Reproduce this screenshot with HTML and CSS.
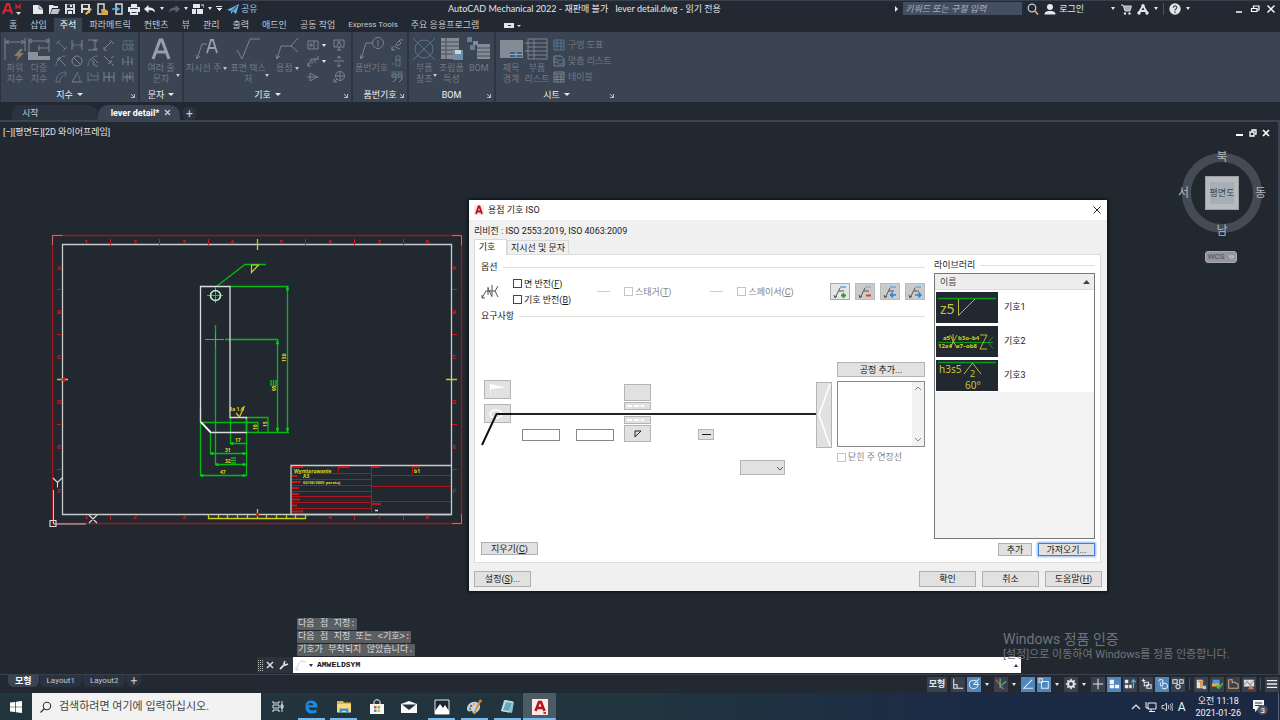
FILE: index.html
```html
<!DOCTYPE html>
<html lang="ko">
<head>
<meta charset="utf-8">
<title>AutoCAD Mechanical 2022</title>
<link rel="stylesheet" href="styles.css">
</head>
<body>
<div class="app">

<header class="titlebar">
  <div class="qat">
    <button class="app-logo" aria-label="응용프로그램 메뉴">
      <svg width="20" height="14" viewBox="0 0 20 14"><path d="M1 12 5 2h2l3 10M2.500 8.500h6" fill="none" stroke="#d8262f" stroke-width="2.200"/><path d="M14 7V3l2 2.500L18 3v4" fill="none" stroke="#d8262f" stroke-width="1.200"/><path d="M14 10h5l-2.500 3z" fill="#ddd"/></svg>
    </button>
    <button aria-label="새로 만들기"><svg viewBox="0 0 12 12"><path d="M1 2h6l4 4v5H1z" fill="#e8e8e8"/><path d="M7 2v4h4" fill="none" stroke="#777"/></svg></button>
    <button aria-label="열기"><svg viewBox="0 0 12 12"><path d="M1 11V2h4l1 1h4v2H4L2 11z" fill="#e8e8e8"/><path d="M4.500 6H12l-2 5H2.500z" fill="#bfc3c8"/></svg></button>
    <button aria-label="저장"><svg viewBox="0 0 12 12"><path d="M1 1h10v10H1z" fill="#d8dadd"/><path d="M3 1.500h6v3.500H3zM3 7h6v4H3z" fill="#2a313c"/><path d="M4 8h4v3H4zM6 2h2v2H6z" fill="#e8e8e8"/></svg></button>
    <button aria-label="다른 이름으로 저장"><svg viewBox="0 0 12 12"><path d="M1 1h9v9H1z" fill="#d8dadd"/><path d="M3 2h5v3H3zM3 7h5v3H3z" fill="#2a313c"/><path d="M5 10.500 10.500 5l1.500 1.500L6.500 12z" fill="#e5b656"/></svg></button>
    <button aria-label="웹에서 열기"><svg viewBox="0 0 12 12"><path d="M2 1h6v10H2z" fill="none" stroke="#d8dadd" stroke-width="1.500"/><path d="M5 6h4l3 2v4H6z" fill="#d9a648"/></svg></button>
    <button aria-label="모바일에 저장"><svg viewBox="0 0 12 12"><path d="M4 1h6v10H4z" fill="none" stroke="#d8dadd" stroke-width="1.500"/><path d="M0 6h6M4 4l3 2-3 2" fill="none" stroke="#5ab3e8" stroke-width="1.500"/></svg></button>
    <button aria-label="플롯"><svg viewBox="0 0 12 12"><path d="M3 1h6v3h3v5h-2v3H2V9H0V4h3z" fill="#e8e8e8"/><path d="M2 5.500h8M3.500 9.500h5" stroke="#39414e"/></svg></button>
    <button aria-label="명령 취소"><svg viewBox="0 0 12 12"><path d="M0 6 4.500 2v2.500C9 4.500 11 6 11 9.500 9.500 7.500 8 7 4.500 7.200V10z" fill="#e8e8e8"/></svg></button>
    <i class="caret"></i>
    <button aria-label="명령 복구"><svg viewBox="0 0 12 12"><path d="M12 6 7.500 2v2.500C3 4.500 1 6 1 9.500 2.500 7.500 4 7 7.500 7.200V10z" fill="#5b636f"/></svg></button>
    <i class="caret"></i>
    <button aria-label="작업공간"><svg viewBox="0 0 12 12"><path d="M1 1h7v4H1zM0 6h4v5H0zM5 6h6v5H5z" fill="#e8e8e8"/><path d="M9 2h3v3" fill="none" stroke="#e8e8e8"/></svg></button>
    <i class="caret"></i>
    <i class="caret bar"></i>
    <button class="share"><svg viewBox="0 0 12 12"><path d="M0 7 12 1 9 11 6 8.500 4 11V8z" fill="#66b8ec"/><path d="m4 8 6-5-4 5.500" stroke="#27303a" fill="none" stroke-width=".7"/></svg>공유</button>
  </div>
  <h1 class="app-title">AutoCAD Mechanical 2022 - 재판매 불가 <span>lever detail.dwg - 읽기 전용</span></h1>
  <div class="title-tools">
    <i class="caret right"></i>
    <input class="search" type="text" aria-label="검색" placeholder="키워드 또는 구절 입력">
    <button aria-label="찾기"><svg viewBox="0 0 12 12"><circle cx="5" cy="5" r="3.800" fill="none" stroke="#c8ccd0" stroke-width="1.300"/><path d="m8 8 3 3.500" stroke="#d9a648" stroke-width="1.800"/></svg></button>
    <button class="login"><svg viewBox="0 0 12 12"><circle cx="6" cy="4" r="3" fill="#e8e8e8"/><path d="M.5 11.500C.5 8.500 3 8 6 8s5.500.5 5.500 3.500z" fill="#e8e8e8"/></svg>로그인</button>
    <i class="caret"></i>
    <button aria-label="앱 스토어"><svg viewBox="0 0 12 12"><path d="M1 2h2l2 6h5l1.500-5H4" fill="#a9aeb5" stroke="#d0d3d7"/><circle cx="5" cy="10.500" r="1.200" fill="#ddd"/><circle cx="9.500" cy="10.500" r="1.200" fill="#ddd"/></svg></button>
    <button aria-label="Autodesk"><svg viewBox="0 0 12 12"><path d="M6 2.500 2 9.500M6 2.500l4 7M3 8h6" fill="none" stroke="#e8e8e8" stroke-width="1.800"/><circle cx="6" cy="2.500" r="1.600" fill="#e8e8e8"/><circle cx="2" cy="10" r="1.700" fill="#e8e8e8"/><circle cx="10" cy="10" r="1.700" fill="#e8e8e8"/></svg></button>
    <i class="caret"></i>
    <i class="sep"></i>
    <button aria-label="도움말"><svg viewBox="0 0 12 12"><circle cx="6" cy="6" r="5.700" fill="#e4e4e4"/><path d="M4.200 4.700c0-2.400 3.700-2.300 3.600 0C7.700 6 6 6 6 7.500M6 8.500V10" fill="none" stroke="#39414e" stroke-width="1.200"/></svg></button>
    <i class="caret"></i>
  </div>
  <div class="win-buttons">
    <button aria-label="최소화"><svg viewBox="0 0 10 10"><path d="M2 8h6" stroke="#fff" stroke-width="1.500"/></svg></button>
    <button aria-label="복원"><svg viewBox="0 0 10 10"><path d="M1.500 4.500h5.500v3H1.500zM3.500 4V2H9v4H7" fill="none" stroke="#fff" stroke-width="1.200"/></svg></button>
    <button aria-label="닫기"><svg viewBox="0 0 10 10"><path d="m1.500 1.500 7 7m0-7-7 7" stroke="#fff" stroke-width="1.400"/></svg></button>
  </div>
</header>

<nav class="ribbon-tabs">
  <button>홈</button><button>삽입</button><button class="active">주석</button><button>파라메트릭</button><button>컨텐츠</button><button>뷰</button><button>관리</button><button>출력</button><button>애드인</button><button>공동 작업</button><button class="latin">Express Tools</button><button>주요 응용프로그램</button>
  <button class="ribbon-mode" aria-label="리본 최소화"><svg width="18" height="7" viewBox="0 0 18 7"><path d="M0 1h10v5H0z" fill="#e2e4e6"/><path d="M4 3h3v1H4z" fill="#333"/><path d="M13 3h4l-2 2z" fill="#ddd"/></svg></button>
</nav>

<section class="ribbon">
  <div class="panel p-dim">
    <div class="panel-body">
      <button class="big"><svg viewBox="0 0 24 24"><path d="M2 1v22M22 1v13M2 5h20M6 3 2 5l4 2M18 3l4 2-4 2" class="g"/><path d="m17 12-6 7h4l-2 5 8-8h-4l3-4z" fill="#8c7c58"/></svg>파워<br>지수</button>
      <button class="big"><svg viewBox="0 0 24 24"><path d="M2 1v14M22 1v14M2 4h20M5 2 2 4l3 2M19 2l3 2-3 2M12 8v6M12 11h10" class="g"/><path d="M1 15h10v4h12v4H1z" fill="#8b919a"/></svg>다중<br>지수</button>
      <div class="tools five">
        <button aria-label="정렬"><svg viewBox="0 0 12 12"><path d="m3 3 7 7M1 5l4-4M8 12l4-4" class="b"/></svg></button>
        <button aria-label="선형"><svg viewBox="0 0 12 12"><path d="M1 1v10M11 1v10" class="g"/><path d="M1 6h10M3 4 1 6l2 2M9 4l2 2-2 2" class="b"/></svg></button>
        <button aria-label="세로"><svg viewBox="0 0 12 12"><path d="M1 1h10M1 11h10M8 1v10M6 3l2-2 2 2M6 9l2 2 2-2" class="g"/></svg></button>
        <button aria-label="꺾기"><svg viewBox="0 0 12 12"><path d="m1 10 8-8M7 1l4 4M1 8v3h3" class="g"/></svg></button>
        <button aria-label="신속"><svg viewBox="0 0 12 12"><path d="M1 2h10M1 5h4v6H1zM7 5h4v2H7zM7 9h4v2H7z" class="b"/></svg></button>
        <button aria-label="반지름"><svg viewBox="0 0 12 12"><path d="M1 11C1 5 5 1 11 1" class="b"/><path d="m3 3 8 8M3 6V3h3" class="g"/></svg></button>
        <button aria-label="지름"><svg viewBox="0 0 12 12"><circle cx="6" cy="6" r="5" class="g"/><path d="m2.500 2.500 7 7" class="g"/></svg></button>
        <button aria-label="조그"><svg viewBox="0 0 12 12"><path d="M1 11C1 5 5 1 11 1" class="b"/><path d="m3 4 4 3-1 2 5 3M6 3l5 5" class="g"/></svg></button>
        <button aria-label="모따기"><svg viewBox="0 0 12 12"><path d="m1 1 6 6M5 8h3V5M8 3l3-2M9 9l2 2" class="g"/></svg></button>
        <button aria-label="끊기"><svg viewBox="0 0 12 12"><path d="M1 3v7M6 1v10M10 3v7" class="g"/><path d="M1 7h10" class="b"/></svg></button>
        <button aria-label="호 길이"><svg viewBox="0 0 12 12"><path d="M1 11C1 5 5 1 11 1v3C7 4 5 7 5 11z" class="b"/></svg></button>
        <button aria-label="각도"><svg viewBox="0 0 12 12"><path d="M7 1 1 11h10" class="g"/><path d="M5 3c3 1 4 4 4 8" class="b"/></svg></button>
        <button aria-label="기준선"><svg viewBox="0 0 12 12"><path d="M1 1v10M11 1v4H4V2M1 9h10V5" class="b"/></svg></button>
        <button aria-label="연속"><svg viewBox="0 0 12 12"><path d="M1 1v10M6 1v10M11 1v10M1 6h10" class="g"/></svg></button>
        <button aria-label="대칭"><svg viewBox="0 0 12 12"><path d="M1 1v10M11 1v10" class="b"/><path d="M5 3v8M8 1v8M1 6h10" class="g"/></svg></button>
      </div>
    </div>
    <div class="panel-title"><span>지수<i class="caret w"></i></span><i class="launch"></i></div>
  </div>
  <div class="panel p-text">
    <div class="panel-body">
      <button class="big"><svg viewBox="0 0 24 24"><path d="M4 22 11 3h2l7 19M7 15h10" fill="none" stroke="#9a9fa7" stroke-width="3"/></svg><span>여러 줄<br>문자</span><i class="caret"></i></button>
    </div>
    <div class="panel-title"><span>문자<i class="caret w"></i></span></div>
  </div>
  <div class="panel p-sym">
    <div class="panel-body">
      <button class="big"><svg viewBox="0 0 24 24"><path d="m2 22 5-15h5M1 18l1 4 3-3" class="g"/><path d="m12 16 4-13h2l4 13M13 11h8" fill="none" stroke="#9a9fa7" stroke-width="1.800"/></svg><span class="row">지시선 주<i class="caret"></i></span></button>
      <button class="big"><svg viewBox="0 0 24 24"><path d="m1 13 5 9L14 2h10" class="g"/></svg><span>표면 텍스<br>처</span><i class="caret"></i></button>
      <button class="big"><svg viewBox="0 0 24 24"><path d="m2 22 4-13h10l7-8M16 9l7 6M1 18l1 4 3-3" class="g"/></svg><span class="row">용접<i class="caret"></i></span></button>
      <div class="tools two">
        <button aria-label="공차"><svg viewBox="0 0 12 12"><path d="M1 2h10v8H1zM7 2v8M2 6h4M4 4v4" class="g"/></svg><i class="caret"></i></button>
        <button aria-label="데이텀"><svg viewBox="0 0 12 12"><path d="M1 1h10v7H1zM6 8v3M4 11h4M4 7l2-5 2 5" class="g"/></svg></button>
        <button aria-label="모서리"><svg viewBox="0 0 12 12"><path d="m1 11 3-7h7M1 8v3h3M5 5v4M8 3v5M11 1v4" class="g"/></svg><i class="caret"></i></button>
        <button aria-label="대상"><svg viewBox="0 0 12 12"><path d="M1 6h10M6 1v3M6 8v4M4 3l2-2 2 2M4 10l2 2 2-2" class="g"/></svg></button>
        <button aria-label="테이퍼"><svg viewBox="0 0 12 12"><path d="M0 6h12M3 2v8l7-4z" class="g"/></svg></button>
        <button aria-label="중심"><svg viewBox="0 0 12 12"><circle cx="7" cy="5" r="4.500" class="g"/><path d="M2 5h10M7 0v10M1 11l3-3M1 8v3h3" class="g"/></svg></button>
      </div>
    </div>
    <div class="panel-title"><span>기호<i class="caret w"></i></span><i class="launch"></i></div>
  </div>
  <div class="panel p-balloon">
    <div class="panel-body">
      <button class="big"><svg viewBox="0 0 24 24"><circle cx="18" cy="6" r="5.500" class="g"/><path d="M18 3v6M1 22 6 6h6M0 18l1 4 3-3" class="g"/></svg>품번기호</button>
      <div class="tools one">
        <button aria-label="부품 참조 작성"><svg viewBox="0 0 12 12"><path d="M1 11c0-5 3-3 4-5M1 8v3h3M5 5l3-3 2 2-3 3zM8 2c1-2 3-1 4-1M4 8l5 2" class="g"/></svg></button>
        <button aria-label="정렬"><svg viewBox="0 0 12 12"><path d="M1 9h2M5 1h4v4H5zM5 5h4v6H5z" class="b"/></svg></button>
        <button aria-label="재번호"><svg viewBox="0 0 12 12"><path d="M0 1h12" class="b"/><path d="M5 6H1V3h4v5l-3 3M11 6H7V3h4v5l-3 3" class="g"/></svg></button>
      </div>
    </div>
    <div class="panel-title"><span>품번기호</span><i class="launch"></i></div>
  </div>
  <div class="panel p-bom">
    <div class="panel-body">
      <button class="big"><svg viewBox="0 0 24 24"><circle cx="12" cy="12" r="9" class="b"/><path d="m1 1 22 22M23 1 1 23" class="b"/></svg><span>부품<br>참조</span><i class="caret"></i></button>
      <button class="big"><svg viewBox="0 0 24 24"><path d="M2 1h18v21H2z" fill="#858b94"/><path d="M2 5h18M2 9h18M2 13h18M2 17h18M7 1v21" stroke="#48515f" fill="none"/><path d="M14 13h10v10H14z" fill="#6b8fab"/><path d="M16 13h6v4h-6z" fill="#d0d4d8"/></svg>조립품<br>특성</button>
      <button class="big"><svg viewBox="0 0 24 24"><path d="M0 0h5v5H0zM3 8h5v5H3z" fill="#607f9b"/><path d="M6 4h5v4H6zM10 7h13v15H10z" fill="#858b94"/><path d="M10 11h13M10 15h13M10 19h13" stroke="#48515f"/></svg>BOM</button>
    </div>
    <div class="panel-title"><span>BOM</span><i class="launch"></i></div>
  </div>
  <div class="panel p-sheet">
    <div class="panel-body">
      <button class="big"><svg viewBox="0 0 24 24"><path d="M1 3h23v18H1z" fill="#858b94"/><path d="M11 15h12v5H11z" fill="#41627c"/><path d="M11 17.500h12M17 15v5" stroke="#8db0c9"/></svg>제목<br>경계</button>
      <button class="big"><svg viewBox="0 0 24 24"><path d="M3 2h19v20H3zM3 6h19M3 10h19M3 14h19M3 18h19M9 2v20M0 6h3M0 14h3" class="g"/></svg>부품<br>리스트</button>
      <div class="tools list">
        <button><svg viewBox="0 0 12 12"><path d="M1 1h10v10H1zM1 4h10M1 7h10M4 1v10M8 1v10" class="b"/></svg>구멍 도표</button>
        <button><svg viewBox="0 0 12 12"><path d="M1 1h7l3 3v7H1zM1 4h3M1 7h3" class="g"/><path d="M5 5h5v4H5z" class="b"/></svg>맞춤 리스트</button>
        <button><svg viewBox="0 0 12 12"><path d="M1 1h10v10H1zM1 3h10M1 6h10M1 8.500h10M4 3v8M8 3v8" class="g"/></svg>테이블</button>
      </div>
    </div>
    <div class="panel-title"><span>시트<i class="caret w"></i></span><i class="launch"></i></div>
  </div>
</section>

<nav class="doc-tabs">
  <button class="doc">시작</button>
  <button class="doc active">lever detail*<svg width="7" height="7" viewBox="0 0 7 7"><path d="m1 1 5 5m0-5L1 6" stroke="#ccd0d6" stroke-width="1.200"/></svg></button>
  <button class="add" aria-label="새 도면">+</button>
</nav>

<main class="canvas">
  <p class="view-label">[−][평면도][2D 와이어프레임]</p>

  <svg class="drawing" width="470" height="552" viewBox="0 122 470 552" role="img" aria-label="lever detail 도면">
    <g fill="none">
      <path d="M52.500 235.500h409v288h-409z" stroke="#a3151b" stroke-width="1.300"/>
      <path d="M52.500 245v-9.500h10M452 235.500h9.500v10M461.500 514v9.500H452" stroke="#c76a6e"/>
      <path d="M62.500 244.500h389v270h-389z" stroke="#c8cacc" stroke-width="1.300"/>
      <path d="M110.500 239v6M159.500 239v6M208.500 239v6M305.500 239v6M354.500 239v6M403.500 239v6M110.500 515v5M354.500 515v5M403.500 515v5M57 289.500h4M57 334.500h4M57 424.500h4M57 469.500h4M452 289.500h5M452 334.500h5M452 424.500h5M452 469.500h5" stroke="#d01616"/>
      <path d="M257.500 239v11M257.500 509v9M57 379.500h11M446 379.500h11M208.500 514.500v4h97v-4M218.500 515v4M227.500 515v4M237.500 515v4M247.500 515v4M266.500 515v4M276.500 515v4M286.500 515v4M295.500 515v4" stroke="#cccc10" stroke-width="1.300"/>
      <path d="m61 379.500 4-2.500v5zM257.500 517l-2.500-4h5z" fill="#e01414"/>
      <path d="m217 286 28-21.500h21M230 286.500h58.500M287.500 286v146M246 432.500h43M225 339.500h53M277.500 339v93M215.500 325v139M200.500 408v68M200.500 422.500H258v10M246.500 417.500H268v15M230.500 417v27M230 443.500h17M246.500 432v44M210.500 432v22M210 453.500h37M215 464.500h32M200 475.500h47" stroke="#05b814" stroke-width="1.300"/>
      <path d="m287.500 286-1 4h2zM287.500 432l-1-4h2zM277.500 340l-1 4h2zM277.500 432l-1-4h2zM230 443.500l3-1v2zM246 453.500l-3-1v2zM210 453.500l3-1v2zM246 464.500l-3-1v2zM215 464.500l3-1v2zM200 475.500l3-1v2zM246 475.500l-3-1v2z" fill="#05d014" stroke="#05d014"/>
      <path d="M200.500 422V286.500H230V417.500h16.500v15H210.500z" stroke="#dadcde" stroke-width="1.300"/>
      <path d="M246.500 419v13" stroke="#05b814" stroke-width="1.300"/>
      <path d="m201 422 9.500 10" stroke="#fff" stroke-width="1.800"/>
      <path d="M207 295.500h16M215.500 287v16M205 339.500h19M215.500 332v15" stroke="#10b5c0"/>
      <circle cx="215.500" cy="295.500" r="5" stroke="#bdf5c8" stroke-width="1.600"/>
      <path d="M251.500 265v7.500l7-7.500zM236 413l3.500 4 5-11" stroke="#d2d21c" stroke-width="1.200"/>
      <path d="M338.500 465v8M371.500 465v49M412.500 465v10M291 473.500h80M291 479.500h80M291 485.500h80M291 491.500h80M291 496.500h80M291 502.500h80M291 508.500h80M371 475.500h80M371 486.500h80M371 501.500h80" stroke="#b3141a"/>
      <path d="M291 514.500v-49h160.500M291 514.500h160" stroke="#c8cacc" stroke-width="1.300"/>
      <path d="M53.500 490v34H86" stroke="#d8c0c2"/>
      <path d="M50 520.500h6v6h-6zM89 515l8 8m0-8-8 8M53 478l4.500 4.500L62 478M57.500 482.500v5" stroke="#dcdcdc" stroke-width="1.100"/>
      <path d="M375 510.500h3" stroke="#ddd" stroke-width="1.500"/>
    </g>
    <g class="ref">
      <text x="86" y="244">1</text><text x="135" y="244">2</text><text x="184" y="244">3</text><text x="232" y="244">4</text><text x="281" y="244">5</text><text x="330" y="244">6</text><text x="379" y="244">7</text><text x="427" y="244">8</text>
      <text x="86" y="519">1</text><text x="135" y="519">2</text><text x="184" y="519">3</text><text x="330" y="519">6</text><text x="379" y="519">7</text><text x="427" y="519">8</text>
      <text x="59" y="270">A</text><text x="59" y="314">B</text><text x="59" y="359">C</text><text x="59" y="404">D</text><text x="59" y="449">E</text><text x="59" y="493">F</text>
      <text x="454" y="270">A</text><text x="454" y="314">B</text><text x="454" y="359">C</text><text x="454" y="404">D</text><text x="454" y="449">E</text><text x="454" y="493">F</text>
    </g>
    <path d="M292 467h11M339 467h10M372 467h8M413 467h7M292 476h5M292 482h9M292 488h7M292 494h7M292 499.500h8M292 505.500h5M292 511.500h11M372 504h9" stroke="#e01414" stroke-width="2" stroke-dasharray="2 .5 3 .4"/>
    <g class="dims">
      <text x="235" y="442">17</text><text x="225" y="452">31</text><text x="225" y="463">32</text><text x="220" y="474">47</text>
      <text transform="translate(286 362)rotate(-90)">150</text><text transform="translate(276 391)rotate(-90)">95</text><text transform="translate(257 430)rotate(-90)">10</text><text transform="translate(267 427)rotate(-90)">15</text>
      <text x="229" y="411">Ra 1.6</text>
      <text x="294" y="473">Wymiarowanie</text><text x="303" y="478">A3</text><text class="date" x="303" y="484">02/06/2005 paretoj</text><text x="414" y="473">b1</text>
    </g>
    <path d="M231 458h5M231 460.500h5M231 463h5M271 380v6M273.500 380v6M276 380v6" stroke="#05b814" stroke-width="1.500"/>
  </svg>

  <div class="doc-buttons">
    <button aria-label="최소화"><svg viewBox="0 0 10 10"><path d="M1 7h7" stroke="#fff" stroke-width="2"/></svg></button>
    <button aria-label="복원"><svg viewBox="0 0 10 10"><path d="M2 4h4v4H2zM4 3V2h4v4H7" fill="none" stroke="#fff" stroke-width="1.300"/></svg></button>
    <button aria-label="닫기"><svg viewBox="0 0 10 10"><path d="m2 2 6 6m0-6L2 8" stroke="#fff" stroke-width="1.700"/></svg></button>
  </div>

  <div class="compass">
    <span class="n">북</span><span class="w">서</span><button class="cube"><b>평면도</b></button><span class="e">동</span><span class="s">남</span>
  </div>
  <button class="wcs">WCS<svg width="7" height="5" viewBox="0 0 7 5"><path d="M1 1h5L3.500 4z" fill="none" stroke="#c9c9d2"/></svg></button>

  <section class="dialog" role="dialog" aria-label="용접 기호 ISO">
    <header class="dialog-title">
      <svg width="10" height="10" viewBox="0 0 10 10"><path d="M0 0h10v10H0z" fill="#f9e9e6"/><path d="M2 9 4.500 1.500h1L8 9M3 6.500h4" fill="none" stroke="#b5121b" stroke-width="1.800"/></svg>
      <h2>용접 기호 ISO</h2>
      <button class="close" aria-label="닫기"><svg width="8" height="8" viewBox="0 0 8 8"><path d="m.5.5 7 7m0-7-7 7" stroke="#222"/></svg></button>
    </header>
    <div class="dialog-body">
      <p class="revision">리비전 : ISO 2553:2019, ISO 4063:2009</p>
      <div class="tabs"><button class="tab on">기호</button><button class="tab">지시선 및 문자</button></div>
      <div class="page">
        <div class="left">
          <h3 class="legend">옵션</h3>
          <div class="options">
            <svg width="18" height="16" viewBox="0 0 18 16"><path d="m1 14 4-7h9M14 7l3-5M14 7l3 6M7 4l4 9M7 3v8M11 1v11M1 11v3h3" fill="none" stroke="#555"/></svg>
            <div class="checks">
              <label><input type="checkbox">면 반전(<u>F</u>)</label>
              <label><input type="checkbox">기호 반전(<u>B</u>)</label>
            </div>
            <i class="dash"></i>
            <label class="off"><input type="checkbox" disabled>스태거(<u>T</u>)</label>
            <i class="dash"></i>
            <label class="off"><input type="checkbox" disabled>스페이서(<u>C</u>)</label>
            <div class="lib-tools">
              <button class="light" aria-label="추가"><svg viewBox="0 0 14 14"><path d="m2 13 5-10M1 10l1 3 2-2" class="k"/><path d="M7 2h6" stroke="#3c9be0" stroke-width="1.300"/><path d="M6 6h5" class="k"/><path d="M8 10.500h5M10.500 8v5" stroke="#17a33c" stroke-width="1.800"/></svg></button>
              <button aria-label="제거"><svg viewBox="0 0 14 14"><path d="m2 13 5-10M1 10l1 3 2-2" class="k"/><path d="M7 2h6" stroke="#6ba8d4"/><path d="M6 6h5" class="k"/><path d="M8 10.500h5" stroke="#e53935" stroke-width="2"/></svg></button>
              <button aria-label="가져오기"><svg viewBox="0 0 14 14"><path d="m2 13 5-10M1 10l1 3 2-2" class="k"/><path d="M7 2h6" stroke="#3c9be0"/><path d="M6 6h5" class="k"/><path d="M7 10h6M10 7.500 7.500 10l2.500 2.500" fill="none" stroke="#1b86e0" stroke-width="1.500"/></svg></button>
              <button aria-label="내보내기"><svg viewBox="0 0 14 14"><path d="m2 13 5-10M1 10l1 3 2-2" class="k"/><path d="M7 2h6" stroke="#3c9be0"/><path d="M6 6h5" class="k"/><path d="M7 10h6M10.500 7.500 13 10l-2.500 2.500" fill="none" stroke="#1b86e0" stroke-width="1.500"/></svg></button>
            </div>
          </div>
          <h3 class="legend">요구사항</h3>
          <div class="weld">
            <div class="ends">
              <button aria-label="현장 용접"><svg width="18" height="14" viewBox="0 0 18 14"><path d="M1 14V1l16 3.500L2 6z" fill="#fff"/></svg></button>
              <button aria-label="전체 둘레"><svg width="18" height="14" viewBox="0 0 18 14"><ellipse cx="7" cy="7" rx="6" ry="4" fill="none" stroke="#fff" stroke-width="1.500"/></svg></button>
            </div>
            <input class="size" type="text" aria-label="치수">
            <input class="size" type="text" aria-label="길이">
            <div class="sides">
              <button class="tall" aria-label="위 기호"></button>
              <button class="thin" aria-label="위 식별선"><i></i></button>
              <button class="thin low" aria-label="아래 식별선"><i></i></button>
              <button class="tall" aria-label="아래 기호"><svg width="8" height="8" viewBox="0 0 8 8"><path d="M1 7V1h6z" fill="none" stroke="#222"/></svg></button>
            </div>
            <button class="contour" aria-label="윤곽"><i></i></button>
            <select aria-label="방법"><option></option></select>
            <button class="tail" aria-label="꼬리"><svg width="14" height="64" viewBox="0 0 14 64"><path d="M13 1 2 32l11 31" fill="none" stroke="#fff" stroke-width="1.500"/></svg></button>
            <div class="process">
              <button class="btn">공정 추가...</button>
              <div class="process-list">
                <textarea aria-label="공정"></textarea>
                <span class="scroll"><svg width="6" height="4" viewBox="0 0 6 4"><path d="m0 4 3-3 3 3" fill="none" stroke="#888"/></svg><svg width="6" height="4" viewBox="0 0 6 4"><path d="m0 0 3 3 3-3" fill="none" stroke="#888"/></svg></span>
              </div>
              <label class="off"><input type="checkbox" disabled>닫힌 주 연장선</label>
            </div>
            <i class="ref-line"></i>
            <svg class="leader" width="32" height="34" viewBox="0 0 32 34"><path d="M1 33 15.500 2H31" fill="none" stroke="#111" stroke-width="2"/></svg>
          </div>
          <button class="btn clear">지우기(<u>C</u>)</button>
        </div>
        <aside class="library">
          <h3 class="legend">라이브러리</h3>
          <div class="lib-box">
            <button class="lib-head">이름<svg width="7" height="4" viewBox="0 0 7 4"><path d="M0 4h7L3.500 0z" fill="#444"/></svg></button>
            <ul>
              <li><svg width="62" height="31" viewBox="0 0 62 31"><path d="M0 0h62v31H0z" fill="#212830"/><path d="M2 6.500h58" stroke="#0a9a18" stroke-width="1.300"/><path d="M22.500 7v16.500L39 7" fill="none" stroke="#b9b93a"/><text x="4" y="22" font-size="14">z5</text></svg>기호1</li>
              <li><svg width="62" height="31" viewBox="0 0 62 31"><path d="M0 0h62v31H0z" fill="#212830"/><path d="M2 16.500h55M57 11l-5 5.500 5 6" fill="none" stroke="#0a9a18"/><path d="m14 9 7 13M21 9l-7 13M17 8v9" stroke="#b9b93a" fill="none"/><g class="heavy"><text x="7" y="14" font-size="6">a5</text><text x="22" y="14" font-size="6">b3o–b4</text><text x="2" y="22" font-size="6">12a4</text><text x="20" y="22" font-size="6">a7–ob8</text></g><path d="M44 9h7l-7 14h7" stroke="#b9b93a" fill="none"/></svg>기호2</li>
              <li><svg width="62" height="31" viewBox="0 0 62 31"><path d="M0 0h62v31H0z" fill="#212830"/><path d="M2 2.500h58" stroke="#0a9a18" stroke-width="1.300"/><path d="m28 14 8.500-11L45 14" fill="none" stroke="#b9b93a"/><text x="3" y="13" font-size="10">h3s5</text><text x="34" y="17" font-size="9">2</text><text x="29" y="29" font-size="10">60°</text></svg>기호3</li>
            </ul>
          </div>
          <div class="lib-actions"><button class="btn small">추가</button><button class="btn focus">가져오기...</button></div>
        </aside>
      </div>
      <footer class="dialog-actions">
        <button class="btn">설정(<u>S</u>)...</button>
        <button class="btn push">확인</button>
        <button class="btn">취소</button>
        <button class="btn">도움말(<u>H</u>)</button>
      </footer>
    </div>
  </section>

  <div class="watermark"><p>Windows 정품 인증</p><p>[설정]으로 이동하여 Windows를 정품 인증합니다.</p></div>

  <div class="command">
    <ol><li><span>다음 점 지정:</span></li><li><span>다음 점 지정 또는 &lt;기호&gt;:</span></li><li><span>기호가 부착되지 않았습니다.</span></li></ol>
    <div class="command-line">
      <i class="grip"></i>
      <button aria-label="닫기"><svg width="8" height="8" viewBox="0 0 8 8"><path d="m1 1 6 6m0-6L1 7" stroke="#ddd" stroke-width="1.500"/></svg></button>
      <button aria-label="사용자화"><svg width="10" height="10" viewBox="0 0 10 10"><path d="m1 9 5-5" stroke="#ddd" stroke-width="1.800"/><path d="M6 1 5 3.500 6.500 5 9 4" fill="none" stroke="#ddd" stroke-width="1.600"/></svg></button>
      <label class="prompt"><svg width="12" height="11" viewBox="0 0 12 11"><path d="m1 10 3-7 3-2 4 1M1 7v3h3" fill="none" stroke="#d3d3d3"/></svg><i class="caret dark"></i><input type="text" value="AMWELDSYM" aria-label="명령"><i class="caret dark up"></i></label>
    </div>
  </div>
</main>

<div class="status">
  <nav class="layouts"><button class="active">모형</button><button class="latin">Layout1</button><button class="latin">Layout2</button><button class="plus" aria-label="새 배치">+</button></nav>
  <div class="status-tools">
    <button class="model">모형</button>
    <button aria-label="직교"><svg viewBox="0 0 14 14"><path d="M2 1v11h11M2 8h4v4" class="s"/></svg></button>
    <button class="lit" aria-label="극좌표"><svg viewBox="0 0 14 14"><circle cx="6.500" cy="7.500" r="5" class="s"/><path d="M6.500 7.500 13 1M6.500 7.500H13" class="s"/></svg></button><i class="caret"></i>
    <button aria-label="등각"><svg viewBox="0 0 14 14"><path d="m1 2 9 11" stroke="#e06060" stroke-width="1.300"/><path d="M6 1v11M8 8l5-4" stroke="#6cc182" stroke-width="1.300"/></svg></button><i class="caret"></i>
    <button class="lit" aria-label="추적"><svg viewBox="0 0 14 14"><path d="M12 2 2 12h11" class="s"/></svg></button>
    <button class="lit" aria-label="스냅"><svg viewBox="0 0 14 14"><path d="M4 4h8v8H4zM1 1h4v4H1z" class="s"/></svg></button><i class="caret"></i>
    <button aria-label="설정"><svg viewBox="0 0 14 14"><circle cx="7" cy="7" r="3.300" fill="none" stroke="#e6e6e6" stroke-width="2.200"/><path d="M7 1v2.500M7 10.500V13M1 7h2.500M10.500 7H13M2.800 2.800l1.700 1.700M9.500 9.500l1.700 1.700M11.200 2.800 9.500 4.500M4.500 9.500l-1.700 1.700" stroke="#e6e6e6" stroke-width="1.800"/></svg></button><i class="caret"></i>
    <button aria-label="축척"><svg viewBox="0 0 14 14"><path d="M7 1v12M1 7h12" class="s"/></svg></button>
    <button class="lit" aria-label="도면층"><svg viewBox="0 0 14 14"><path d="M2 2h5v5H2zM2 8h5v4H2zM8 8h5v4H8z" fill="#f4f6f8"/></svg></button>
    <button aria-label="이동"><svg viewBox="0 0 14 14"><path d="M1 2h4v4H1zM1 8h4v4H1zM6 8h3v4H6z" fill="#e6e6e6"/><path d="M11 12V3M8.500 5 11 2l2.500 3" fill="none" stroke="#5ab3e8" stroke-width="1.400"/></svg></button>
    <button aria-label="복사"><svg viewBox="0 0 14 14"><path d="M2 3h4M4 1v4M5 5h5v4H5zM8 8h5v4H8z" class="s"/></svg></button>
    <button class="lit" aria-label="연관"><svg viewBox="0 0 14 14"><path d="M3 4c0-3 5-3 5 0v4c0 2-3 2-3 0V5M7 6h3c3 0 4 3 3 5s-5 2-6 0" class="s"/></svg></button>
    <button aria-label="객체"><svg viewBox="0 0 14 14"><path d="M1 2h5v4H1zM9 2h4v4H9z" class="s"/><circle cx="7" cy="10" r="2.500" class="s"/></svg></button>
    <i class="sep"></i>
    <button aria-label="표준"><svg viewBox="0 0 14 14"><path d="M2 2h7v10H2z" fill="#e8e2d6"/><path d="M4 3h6v2H8v6H6V5H4z" fill="#e08a3c"/><path d="M9 9h4v4H9z" fill="#c9c9c9"/></svg></button>
    <button aria-label="검사"><svg viewBox="0 0 14 14"><path d="M2 2h8v4H2z" fill="#4f9bd8"/><path d="M1 6h9v4H1z" fill="#e0a845"/><path d="m6 9 3 3 5-6" fill="none" stroke="#48b04c" stroke-width="2"/></svg></button>
    <button aria-label="잠금"><svg viewBox="0 0 14 14"><path d="M2 2h4v4M2 2v10h11V7L9 5H6" fill="none" stroke="#d6a37b" stroke-width="1.300"/></svg></button>
    <button aria-label="그래픽"><svg viewBox="0 0 14 14"><path d="M1 2h12v8H1z" fill="#dedede"/><path d="m1 8 4-4 3 4 5-5" stroke="#56697d" fill="none"/><path d="m6 13 3-5 4 5z" fill="#d77b4e"/></svg></button>
    <i class="sep"></i>
    <button aria-label="사용자화"><svg viewBox="0 0 14 14"><path d="M1 3h12M1 7h12M1 11h12" stroke="#f0f0f0" stroke-width="1.500"/></svg></button>
  </div>
</div>

<footer class="taskbar">
  <button class="start" aria-label="시작"><svg width="12" height="12" viewBox="0 0 12 12"><path d="M0 1.500 5.300.9v4.800H0zM6 .8 12 0v5.700H6zM0 6.300h5.300v4.800L0 10.500zM6 6.300h6V12l-6-.8z" fill="#fff"/></svg></button>
  <label class="find"><svg width="12" height="12" viewBox="0 0 12 12"><circle cx="7" cy="5" r="3.700" fill="none" stroke="#333" stroke-width="1.100"/><path d="M4.500 7.500.5 11.500" stroke="#333" stroke-width="1.200"/></svg><input type="text" placeholder="검색하려면 여기에 입력하십시오." aria-label="검색"></label>
  <button class="taskview" aria-label="작업 보기"><svg width="12" height="11" viewBox="0 0 12 11"><path d="M1 0v2h6V0M1 11V9h6v2M1 4h6v3H1zM10 0v11M9 4h2v3H9z" fill="none" stroke="#dfe4e6"/></svg></button>
  <div class="apps">
    <button class="run" aria-label="Edge"><svg viewBox="0 0 16 16"><path d="M2 7C3 2.500 6 1.500 8.500 1.500c4 0 6 3 6 7H5.500c.3 3 4.500 3.800 8 2v3c-5 2.400-11 .5-11-5C2.500 6.500 5 4.500 6.500 4 5.500 5 5.300 6 5.300 6.300h5C10.300 3 5 3 2 7z" fill="#1e8ae6"/></svg></button>
    <button class="run" aria-label="탐색기"><svg viewBox="0 0 16 16"><path d="M1 2h6l1 1.500h7V13H1z" fill="#e9b13d"/><path d="M1 5h14v8.500H1z" fill="#fcd879"/><path d="M3.500 14V9.500h9V14h-2.500v-2H6v2z" fill="#3d97d3"/></svg></button>
    <button aria-label="스토어"><svg viewBox="0 0 16 16"><path d="M1 5h14v10H1z" fill="#f5f5f5"/><path d="M5 5V3c0-3 6-3 6 0v2" fill="none" stroke="#f5f5f5"/><path d="M5 7h2.500v2.500H5z" fill="#e2502a"/><path d="M8.500 7H11v2.500H8.500z" fill="#7cb82f"/><path d="M5 10.500h2.500V13H5z" fill="#28a0df"/><path d="M8.500 10.500H11V13H8.500z" fill="#f5b51d"/></svg></button>
    <button aria-label="메일"><svg viewBox="0 0 16 16"><path d="m0 5 8-3 8 3v9H0z" fill="#f8f8f8"/><path d="m1 5.500 7 5.500 7-5.500z" fill="#243640"/></svg></button>
    <button class="run" aria-label="사진"><svg viewBox="0 0 16 16"><path d="M1 1h14v14H1z" fill="#1c2630" stroke="#e8e8e8"/><path d="m1 12 5-7 3 4 2-3 4 6v3H1z" fill="#fff"/></svg></button>
    <button class="run" aria-label="그림판"><svg viewBox="0 0 16 16"><path d="M1 10C1 5 6 2 10 3s5 5 3 8-5 4-6 3 0-3-2-2-4 0-4-2z" fill="#b9d9ec"/><circle cx="5" cy="7" r="1.300" fill="#d9463e"/><circle cx="8" cy="5" r="1.200" fill="#e9b32e"/><circle cx="4" cy="10" r="1.200" fill="#54a94d"/><path d="m8 15 6-13" stroke="#e28a36" stroke-width="1.800"/><circle cx="14.500" cy="2" r="1.500" fill="#c9813d"/></svg></button>
    <button class="run" aria-label="메모장"><svg viewBox="0 0 16 16"><path d="m5 1 10 2-2 11-11-2z" fill="#7fc3d3"/><path d="m6 1 8 1.500-4 11L2 12z" fill="#c3e0e6"/><path d="m7 3 6 1-3 8-6-1z" fill="#63a9bb"/></svg></button>
    <button class="run current" aria-label="AutoCAD"><svg viewBox="0 0 16 16"><path d="M0 0h16v16H0z" fill="#fbeae6"/><path d="M3.500 12 7 3h2l3.500 9M5 9h6" fill="none" stroke="#b5121b" stroke-width="2.500"/><path d="M11.500 13h2.500v2h-2.500z" fill="#d8262f"/></svg></button>
  </div>
  <div class="tray">
    <svg width="10" height="12" viewBox="0 0 10 12"><path d="m1 8 4-4 4 4" fill="none" stroke="#f0f0f0" stroke-width="1.200"/></svg>
    <svg width="12" height="12" viewBox="0 0 12 12"><path d="M3 2h8v6H3zM6 8v2.500M4 10.500h6M1 1v6h3" fill="none" stroke="#f0f0f0"/></svg>
    <svg width="12" height="12" viewBox="0 0 12 12"><path d="M1 4.500h2L5.500 2v8L3 7.500H1zM7 4c1 1 1 3 0 4M9 3c1.500 2 1.500 4 0 6M10.800 2c1.700 2 1.700 6 0 8" fill="none" stroke="#e0e0e0" stroke-width=".9"/></svg>
    <span class="ime">A</span>
    <time>오전 11:18<br>2021-01-26</time>
    <button class="notice" aria-label="알림 3"><svg width="16" height="16" viewBox="0 0 16 16"><path d="M1 1h11v9H6l-3 3v-3H1z" fill="#f4f4f4"/><path d="M3 4h7M3 6.500h7" stroke="#333"/><circle cx="10.500" cy="11" r="5" fill="#4d5560"/><text x="8.500" y="14" fill="#fff" font-size="8">3</text></svg></button>
    <i class="show-desktop"></i>
  </div>
</footer>
</div>
</body>
</html>
```

FILE: styles.css
```css
* { box-sizing: border-box; }
body {
  margin: 0;
  background: #212830;
  font-family: Roboto, "Noto Sans CJK KR", sans-serif;
  font-size: 9px;
  line-height: 12px;
  color: #e4e6e9;
}
button, input, textarea, select { font: inherit; color: inherit; margin: 0; }
button { padding: 0; border: 0; background: none; display: flex; align-items: center; justify-content: center; white-space: nowrap; }
p, h1, h2, h3, ul, ol { margin: 0; padding: 0; font-size: inherit; font-weight: 400; list-style: none; }
svg { flex: none; display: block; }
.app { display: flex; flex-direction: column; min-height: 100vh; }
.latin { font-size: 8px; }

.caret { flex: none; width: 0; height: 0; border: 2px solid transparent; border-top: 3px solid #e6e8ea; border-bottom: 0; }
.caret.w { border-width: 3px 3px 0; display: inline-block; margin-left: 4px; vertical-align: 2px; }
.caret.right { border: 3px solid transparent; border-left-color: #e6e8ea; border-right: 0; }
.caret.bar { width: 6px; height: 5px; border: 0; background: linear-gradient(#e6e8ea, #e6e8ea) 0 0 / 6px 1px no-repeat, conic-gradient(from -45deg at 50% 100%, #e6e8ea 90deg, transparent 0) 0 2px / 6px 3px no-repeat; }
.caret.dark { border-top-color: #333; }
.caret.up { border-top: 0; border-bottom: 3px solid #333; }
.sep { flex: none; width: 1px; height: 12px; background: #4a5260; }

/* Title bar */
.titlebar { display: grid; grid-template-columns: 35% auto 1fr auto; align-items: center; height: 16px; background: #222933; border-top: 1px solid #3a414d; }
.qat { display: flex; align-items: center; gap: 4px; padding-left: 2px; }
.qat svg, .title-tools svg { width: 12px; height: 12px; }
.qat .app-logo { margin-right: 6px; }
.qat .app-logo svg { width: 20px; height: 14px; }
.qat .caret.bar { margin-right: 1px; }
.share { gap: 2px; color: #a9cbe4; }
.app-title { white-space: pre; font-family: Lato, "Noto Sans CJK KR", sans-serif; }
.app-title span { margin-left: 5px; }
.title-tools { display: flex; align-items: center; justify-content: flex-end; gap: 5px; margin-right: 44px; }
.title-tools .search { width: 119px; height: 13px; padding: 0 2px; border: 0; background: #444e61; font-style: italic; }
.search::placeholder { color: #a9b0bd; }
.title-tools .login { gap: 3px; margin-right: 22px; }
.win-buttons { display: flex; gap: 6px; padding-right: 4px; }
.win-buttons svg { width: 10px; height: 10px; }

/* Ribbon tabs */
.ribbon-tabs { display: flex; align-items: stretch; gap: 1px; height: 16px; background: #222933; padding: 2px 0 0 3px; }
.ribbon-tabs button { padding: 0 6px; color: #c3c7cd; height: 14px; }
.ribbon-tabs .active { background: #3b4453; color: #fff; }
.ribbon-tabs .ribbon-mode { margin-left: 12px; }

/* Ribbon */
.ribbon { display: flex; height: 70px; background: #3b4453; border-left: 1px solid #2c3440; }
.panel { display: flex; flex-direction: column; border-right: 2px solid #2d3541; }
.p-dim { width: 139px; } .p-text { width: 44px; } .p-sym { width: 169px; }
.p-balloon { width: 56px; } .p-bom { width: 87px; } .p-sheet { width: 121px; border: 0; }
.panel-body { flex: 1; display: flex; align-items: flex-start; padding: 5px 2px 0; color: #727985; }
.panel-title { display: grid; grid-template-columns: 1fr auto 1fr; height: 16px; line-height: 18px; color: #f0f1f3; }
.panel-title span { grid-column: 2; white-space: nowrap; }
.launch { justify-self: end; align-self: center; width: 4px; height: 4px; margin: 2px 3px 0 0; border: solid #b4b9c1; border-width: 0 1px 1px 0; background: linear-gradient(45deg, transparent 40%, #b4b9c1 40% 60%, transparent 60%); }
.big { position: relative; flex-direction: column; line-height: 11px; width: 25px; min-height: 48px; justify-content: flex-start; }
.big svg { width: 24px; height: 24px; margin-bottom: 2px; }
.big > .caret { position: absolute; right: 0; bottom: 8px; }
.big .row { display: flex; align-items: center; gap: 2px; }
.big .caret { border-top-color: #c4c8ce; }
.g { fill: none; stroke: #7c838d; }
.b { fill: none; stroke: #56758f; }
.tools { display: grid; grid-auto-rows: 16px; }
.tools button { width: 16px; gap: 3px; }
.tools svg { width: 12px; height: 12px; }
.five { grid-template-columns: 16px 16px 16px 19px 16px; margin-left: 2px; }
.two { grid-template-columns: 26px 16px; margin-left: 2px; }
.two button { width: 22px; justify-content: flex-start; }
.one { margin-left: 1px; }
.p-text .big { width: 38px; }
.p-sym .big { width: 41px; }
.p-sym .big + .big { width: 43px; }
.p-sym .big + .big + .big { width: 36px; }
.p-balloon .big { width: 34px; }
.p-bom .panel-body { gap: 1px; }
.p-bom .big { width: 27px; }
.p-sheet .big { width: 26px; }
.list button { width: auto; justify-content: flex-start; }
.list { margin-left: 3px; }

/* Drawing tabs */
.doc-tabs { display: flex; align-items: flex-end; height: 20px; padding: 0 12px; background: #222933; border-bottom: 2px solid #3b4453; }
.doc { height: 15px; width: 86px; padding: 0 10px; justify-content: flex-start; background: #2b333f; border-radius: 8px 10px 0 0; color: #c9cdd3; }
.doc.active { width: 82px; padding: 0 8px 0 12px; justify-content: center; gap: 5px; background: #3b4453; font-weight: 700; color: #fff; border-radius: 10px 10px 0 0; }
.doc-tabs .add { width: 13px; height: 13px; background: #2b333f; font-size: 12px; color: #ccc; margin-left: 3px; border-radius: 4px; }

/* Drawing area */
.canvas { position: relative; flex: 1; min-height: 552px; background: #212830; border-right: 2px solid #3b4453; overflow: hidden; }
.view-label { padding: 4px 3px; }
.drawing { position: absolute; left: 0; top: 0; font-family: "Liberation Sans", sans-serif; }
.ref { font-size: 6px; font-weight: 700; fill: #e01414; text-anchor: middle; }
.dims { font-size: 5px; font-weight: 700; fill: #dcdc1e; font-family: "Open Sans", sans-serif; }
.dims .date { font-size: 4px; }
.doc-buttons { position: absolute; right: 7px; top: 6px; display: flex; gap: 3px; }
.doc-buttons svg { width: 10px; height: 10px; }
.compass { position: absolute; right: 16px; top: 31px; width: 80px; height: 80px; border: 9px solid #444b54; border-radius: 50%; display: grid; place-items: center; font-size: 12px; line-height: 12px; color: #b4b7bb; }
.compass span { position: absolute; }
.compass .n { top: -11px; } .compass .s { bottom: -13px; } .compass .w { left: -13px; } .compass .e { right: -13px; }
.cube { width: 34px; height: 34px; background: #b8babd; border: 1px solid #9b9ea3; color: #3e434a; line-height: 22px; font-size: 9px; }
.cube b { background: #a7afb6; font-weight: 400; margin: 0 -3px; }
.wcs { position: absolute; right: 41px; top: 129px; width: 32px; height: 12px; gap: 3px; font-size: 8px; background: #9595a1; border: 1px solid #a9a9b3; border-radius: 3px; color: #4c505a; }
.watermark { position: absolute; left: 1003px; bottom: 12px; color: #70757b; white-space: nowrap; font-size: 11px; line-height: 15px; z-index: 3; }
.watermark p:first-child { font-size: 14px; line-height: 16px; }

/* Command line */
.command { position: absolute; left: 257px; right: 257px; bottom: 1px; }
.command ol { padding: 0 0 0 40px; font-family: "Liberation Mono", "Noto Sans CJK KR", monospace; }
.command li { height: 13px; line-height: 12px; }
.command li span { display: inline-block; height: 12px; padding: 0 1px; background: #5b5e61; color: #d8dadc; border-radius: 1px; }
.command-line { display: flex; align-items: center; height: 16px; background: #2b323d; }
.command-line button { width: 14px; }
.command-line .grip { width: 5px; height: 12px; margin-left: 1px; background: repeating-linear-gradient(#2b323d 0 1px, transparent 1px 2px), repeating-linear-gradient(90deg, #bbb 0 1px, transparent 1px 2px); }
.prompt { flex: 1; display: flex; align-items: center; gap: 2px; height: 16px; margin-left: 2px; padding: 0 3px 0 2px; background: #fff; color: #111; }
.prompt input { flex: 1; border: 0; padding: 0 2px; background: none; font: 700 8px/12px "Liberation Mono", monospace; }

/* Weld dialog */
.dialog { position: absolute; left: 469px; top: 78px; width: 638px; background: #f0f0f0; color: #1b1b1b; box-shadow: 0 0 3px 1px #0b0e12; z-index: 2; }
.dialog-title { display: flex; align-items: center; gap: 4px; height: 20px; padding: 0 6px 0 5px; background: #fff; }
.dialog-title .close { margin-left: auto; }
.dialog-body { padding: 5px 6px 4px 5px; }
.revision { line-height: 12px; }
.tabs { display: flex; align-items: flex-end; height: 17px; }
.tab { height: 14px; padding: 0 3px; border: 1px solid #dadada; border-bottom: 0; background: #f0f0f0; }
.tab.on { position: relative; z-index: 1; width: 33px; height: 16px; padding-bottom: 2px; margin-bottom: -1px; padding-right: 10px; background: #fff; }
.page { display: flex; gap: 9px; padding: 6px 5px 6px 6px; background: #fff; border: 1px solid #dcdcdc; }
.left { flex: 1; min-width: 0; display: flex; flex-direction: column; }
.legend { display: flex; align-items: center; gap: 5px; height: 12px; }
.legend::after { content: ""; flex: 1; height: 1px; background: #dfdfd3; }
.options { display: flex; align-items: center; height: 37px; }
.checks { display: grid; gap: 4px; margin-left: 14px; width: 84px; }
label { display: flex; align-items: center; white-space: nowrap; }
input[type=checkbox] { appearance: none; flex: none; width: 9px; height: 9px; border: 1px solid #444; background: #fff; margin-right: 2px; }
input[type=checkbox]:disabled { border-color: #c4c4c4; }
.off { color: #858585; }
.dash { width: 13px; height: 1px; background: #ccc; margin-right: 14px; }
.off + .dash { margin-left: 39px; }
.lib-tools { display: flex; gap: 5px; margin-left: auto; }
.lib-tools button { width: 20px; height: 17px; background: #cbcbcb; border: 1px solid #bbb; }
.lib-tools .light { background: #e5e5e5; border-color: #aaa; }
.lib-tools svg { width: 14px; height: 14px; }
.k { fill: none; stroke: #555; }
.weld { position: relative; display: grid; grid-template-columns: 41px 54px 48px 74px 42px 1fr 21px 88px; align-items: start; margin-top: 40px; }
.weld button { background: #e1e1e1; border: 1px solid #b4b4b4; }
.ends { display: grid; gap: 5px; padding: 18px 0 0 3px; }
.ends button { width: 27px; height: 19px; }
.weld .size { width: 38px; height: 12px; margin-top: 67px; border: 1px solid #888; background: #fff; }
.sides { display: grid; gap: 1px; margin-top: 22px; width: 27px; }
.sides .tall { height: 17px; }
.sides .thin { height: 8px; justify-content: flex-start; padding-left: 2px; }
.thin i { width: 17px; height: 2px; background: repeating-linear-gradient(90deg, #fff 0 5px, transparent 5px 7px); }
.sides .low { margin-top: 5px; }
.contour { width: 16px; height: 11px; margin-top: 67px; }
.contour i { width: 9px; height: 1px; background: #222; }
.weld select { appearance: none; width: 45px; height: 15px; margin-top: 98px; border: 1px solid #b4b4b4; background-color: #e1e1e1; background-image: linear-gradient(45deg, transparent 45%, #555 45% 60%, transparent 60%), linear-gradient(-45deg, transparent 45%, #555 45% 60%, transparent 60%); background-size: 3px 3px; background-position: 36px 6px, 39px 6px; background-repeat: no-repeat; }
.tail { width: 16px; height: 66px; margin-top: 20px; }
.process { display: grid; grid-template-columns: minmax(0, 1fr); gap: 4px; }
.process-list { display: flex; height: 66px; border: 1px solid #8a8a8a; }
.process-list textarea { flex: 1; min-width: 0; border: 0; padding: 0; resize: none; background: #fff; }
.scroll { display: flex; flex: none; flex-direction: column; align-items: center; justify-content: space-between; width: 12px; padding: 4px 0; background: #f2f2f2; }
.ref-line { position: absolute; left: 30px; right: 109px; top: 51px; height: 2px; background: #222; }
.leader { position: absolute; left: 0; top: 50px; pointer-events: none; }
.btn { min-width: 57px; height: 15px; padding: 0 4px; background: #e1e1e1; border: 1px solid #b0b0b0; }
.clear { align-self: flex-start; height: 13px; margin: auto 0 1px; }
.library { display: flex; flex-direction: column; width: 161px; }
.library .legend { margin-top: -2px; }
.lib-box { height: 266px; margin-top: 2px; border: 1px solid #777; background: #f3f3f3; }
.lib-head { display: flex; justify-content: space-between; width: 100%; height: 16px; padding: 0 4px 0 5px; background: #ededed; border-bottom: 1px solid #ddd; color: #444; }
.lib-box ul { background: #fff; }
.lib-box li { display: flex; align-items: center; gap: 6px; height: 34px; padding-left: 1px; }
.lib-box text { fill: #c4c43a; font-family: "Noto Sans", sans-serif; font-weight: 400; }
.lib-box .heavy text { font-weight: 700; fill: #d2d21c; }
.lib-actions { display: flex; justify-content: flex-end; gap: 6px; margin-top: 4px; }
.lib-actions .btn { height: 13px; }
.btn.small { min-width: 34px; }
.btn.focus { border-color: #3f7fe0; box-shadow: 0 0 2px 1px #8db5f2; }
.dialog-actions { display: flex; gap: 6px; margin-top: 8px; margin-right: -1px; }
.dialog-actions .btn { height: 16px; }
.dialog-actions .push { margin-left: auto; }

/* Layout tabs and status bar */
.status { display: flex; justify-content: space-between; height: 19px; background: #222933; border-top: 1px solid #3a414d; }
.layouts { display: flex; align-items: flex-start; padding-left: 8px; }
.layouts button { height: 12px; padding: 0 7px; margin-right: 1px; background: #2b333f; color: #c3c7cd; border-radius: 0 0 6px 6px; }
.layouts .active { background: #3b4453; color: #fff; font-weight: 700; }
.layouts .plus { padding: 0 4px; font-size: 12px; }
.status-tools { display: flex; align-items: center; padding-right: 1px; gap: 2px; }
.status-tools button { width: 14px; height: 15px; background: #39414f; }
.status-tools svg { width: 12px; height: 12px; }
.status-tools .model { width: 20px; font-weight: 700; margin-right: 2px; }
.status-tools .lit { background: #4f86bd; }
.status-tools .caret { margin: 0 3px 0 2px; }
.status-tools .sep { margin: 0 2px; }
.s { fill: none; stroke: #e6e8ea; stroke-width: 1.2; }

/* Taskbar */
.taskbar { display: flex; align-items: stretch; height: 27px; background: linear-gradient(90deg, #22343c, #21353f 50%, #1b2b45 75%, #1a2844); color: #f4f4f4; }
.start { width: 32px; }
.find { display: flex; align-items: center; width: 229px; padding: 0 8px; gap: 7px; background: #f2f2f2; }
.find input { flex: 1; min-width: 0; border: 0; padding: 0; background: none; font-size: 11px; line-height: 16px; }
.find input::placeholder { color: #444; }
.taskview { width: 34px; }
.apps { display: flex; width: 261px; }
.apps button { flex: 1; background: linear-gradient(#76b9ed, #76b9ed) 50% 100% / 0 2px no-repeat; }
.apps svg { width: 16px; height: 16px; }
.apps .run { background-size: 27px 2px; }
.apps .current { background-color: #4a5b66; background-size: 100% 2px; }
.tray { display: flex; align-items: center; gap: 4px; margin-left: auto; }
.ime { font-size: 12px; margin: 0 6px 0 1px; }
.tray time { text-align: center; line-height: 12px; margin-right: 7px; }
.show-desktop { width: 1px; height: 27px; background: #55627a; margin: 0 1px 0 6px; }
```
